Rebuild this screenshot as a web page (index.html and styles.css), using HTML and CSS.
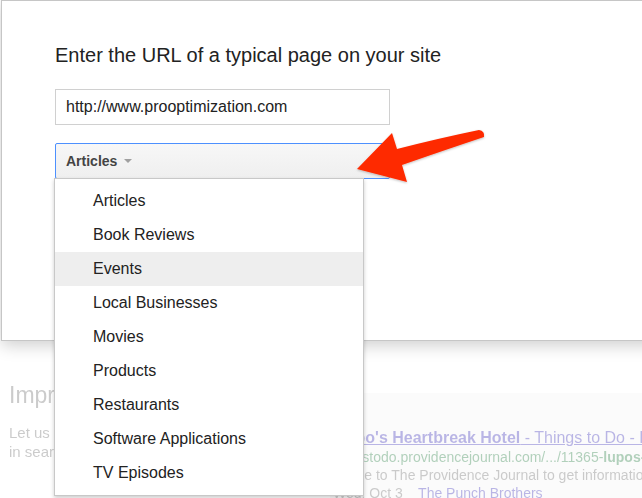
FILE: index.html
```html
<!DOCTYPE html>
<html>
<head>
<meta charset="utf-8">
<link rel="stylesheet" href="styles.css">
</head>
<body>
<div class="page">
  <div class="intro">
    <h2 class="intro-title">Improve how your site appears</h2>
    <p class="intro-text">Let us know about the structured data on your pages<br>in search results</p>
  </div>
  <div class="result">
    <div class="result-title"><b>Lupo's Heartbreak Hotel</b> - Things to Do - Providence</div>
    <div class="result-url">thingstodo.providencejournal.com/.../11365-<b>lupos-heartbreak</b></div>
    <div class="result-snippet">Welcome to The Providence Journal to get information, events</div>
    <div class="result-meta">Wed, Oct 3 &nbsp;&nbsp; <span class="result-link">The Punch Brothers</span></div>
  </div>
</div>

<div class="dialog">
  <h1 class="dialog-title">Enter the URL of a typical page on your site</h1>
  <div class="url-input">http://www.prooptimization.com</div>
  <div class="select">
    <span class="select-label">Articles</span>
    <span class="select-caret"></span>
  </div>
</div>

<ul class="menu">
  <li class="menu-item">Articles</li>
  <li class="menu-item">Book Reviews</li>
  <li class="menu-item is-hover">Events</li>
  <li class="menu-item">Local Businesses</li>
  <li class="menu-item">Movies</li>
  <li class="menu-item">Products</li>
  <li class="menu-item">Restaurants</li>
  <li class="menu-item">Software Applications</li>
  <li class="menu-item">TV Episodes</li>
</ul>

<svg class="arrow" width="140" height="60" viewBox="350 128 140 60">
  <defs>
    <filter id="sh" x="-10%" y="-10%" width="130%" height="140%">
      <feDropShadow dx="0" dy="1" stdDeviation="1" flood-color="#000" flood-opacity="0.25"/>
    </filter>
  </defs>
  <path filter="url(#sh)" fill="#fe2a00" d="M357 169 L392 133 L397 149 Q440 138 479 130 Q485 131 484 137 Q445 150 402 165 L407 182 Z"/>
</svg>
</body>
</html>
```

FILE: styles.css
```css
* { box-sizing: border-box; }
html, body { margin: 0; padding: 0; }
body {
  width: 642px;
  height: 498px;
  overflow: hidden;
  position: relative;
  background: #fff;
  font-family: "Liberation Sans", Arial, sans-serif;
}

/* underlying faded page */
.page {
  padding-top: 380px;
  display: flex;
  opacity: 0.3;
}
.intro {
  width: 330px;
  padding-left: 9px;
  flex: none;
  white-space: nowrap;
}
.intro-title {
  margin: 0;
  font-weight: normal;
  font-size: 23px;
  color: #555;
  line-height: 30px;
}
.intro-text {
  margin: 13px 0 0;
  font-size: 15px;
  line-height: 19px;
  color: #555;
}
.result {
  margin-top: 13px;
  padding-top: 35px;
  background: #f2f2f2;
  flex: 1;
  min-width: 0;
  white-space: nowrap;
  overflow: hidden;
  font-size: 14px;
  line-height: 18px;
}
.result-title {
  color: #1a0dab;
  text-decoration: underline;
  font-size: 16px;
  line-height: 20px;
  margin-left: 6px;
}
.result-url { color: #006621; margin-left: 2px; }
.result-snippet { color: #545454; margin-left: -16px; }
.result-meta { color: #545454; margin-left: 3px; }
.result-link { color: #1a0dab; }

/* dialog */
.dialog {
  position: absolute;
  left: 1px;
  top: 0;
  width: 700px;
  height: 341px;
  background: #fff;
  border: 1px solid #c6c6c6;
  box-shadow: 0 4px 16px rgba(0,0,0,0.2);
  padding: 42px 0 0 53px;
}
.dialog-title {
  margin: 0;
  font-weight: normal;
  font-size: 20px;
  line-height: 24px;
  color: #222;
}
.url-input {
  margin-top: 22px;
  width: 335px;
  height: 36px;
  border: 1px solid #d0d0d0;
  padding: 0 10px;
  font-size: 16px;
  line-height: 34px;
  color: #222;
}
.select {
  margin-top: 18px;
  width: 335px;
  height: 36px;
  border: 1px solid #4d90fe;
  border-radius: 2px;
  background: linear-gradient(#f7f7f7, #efefef);
  padding: 0 10px;
  display: flex;
  align-items: center;
  gap: 7px;
}
.select-label {
  font-weight: bold;
  font-size: 14px;
  color: #444;
}
.select-caret {
  width: 0;
  height: 0;
  border-left: 4px solid transparent;
  border-right: 4px solid transparent;
  border-top: 4px solid #a0a0a0;
}

/* dropdown menu */
.menu {
  position: absolute;
  left: 54px;
  top: 178px;
  width: 310px;
  margin: 0;
  padding: 5px 0 5px;
  list-style: none;
  background: #fff;
  border: 1px solid #c8c8c8;
  box-shadow: 0 2px 4px rgba(0,0,0,0.2);
}
.menu-item {
  height: 34px;
  line-height: 34px;
  padding-left: 38px;
  font-size: 16px;
  color: #222;
}
.menu-item.is-hover { background: #eee; }

.arrow {
  position: absolute;
  left: 350px;
  top: 128px;
}
```
